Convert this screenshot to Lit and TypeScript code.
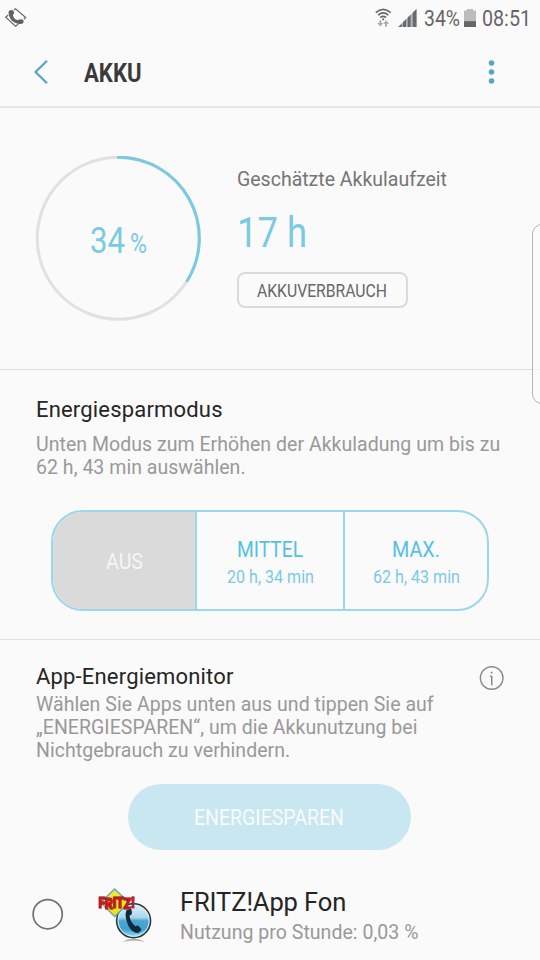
import { LitElement, html, css, svg } from "lit";
import { customElement, property } from "lit/decorators.js";

/** A single line of narrow text, squeezed to a given advance width. */
@customElement("narrow-text")
class NarrowText extends LitElement {
  @property() text = "";
  @property({ type: Number }) size = 22;
  @property({ type: Number }) width = 50;
  static styles = css`
    :host { display: block; flex: none; }
    svg { display: block; overflow: visible; }
    text { font-family: Roboto, sans-serif; fill: currentColor; }
  `;
  render() {
    const cap = Math.round(this.size * 0.711);
    return html`<svg width=${this.width} height=${cap}>
      <text x="0" y=${cap} font-size=${this.size} textLength=${this.width} lengthAdjust="spacingAndGlyphs">${this.text}</text>
    </svg>`;
  }
}

const narrow = (text: string, size: number, width: number, cls = "") =>
  html`<narrow-text class=${cls} .text=${text} .size=${size} .width=${width}></narrow-text>`;

const callIcon = html`<svg width="22" height="20" viewBox="0 0 22 20">
  <g fill="none" stroke="#6a6a6a" stroke-width="1.200">
    <path d="M9 2 10.500 .8 20.700 9.500 18.800 11.300"/><path d="M3.200 7 .8 9.200 10.500 18.200 13.300 16"/>
  </g>
  <g fill="#626262">
    <ellipse cx="6.300" cy="4.600" rx="2.700" ry="2.500"/><ellipse cx="15.700" cy="13.600" rx="2.900" ry="2.400"/>
    <path d="M3.700 4.500C3.600 11 8.500 16 15.500 16L14 12.200C10.500 12.200 7.800 9.600 8 6z"/>
  </g>
</svg>`;

const wifiIcon = html`<svg width="17" height="20" viewBox="0 0 17 20">
  <g fill="none" stroke="#666" stroke-width="1.6">
    <path d="M.8 4.600Q8.200-2 15.700 4.600"/><path d="M3.100 7.100Q8.200 2.800 13.300 7.100"/><path d="M5.300 9.500Q8.200 7.300 11 9.500"/>
  </g>
  <circle cx="8.200" cy="11.300" r="1.100" fill="#666"/>
  <path d="M4.300 12.500v2.500H2.300l3 3.500 3-3.500H6.300v-2.500zM10 18.500v-2.800H8.200l2.900-3.400 2.900 3.400H12v2.800z" fill="#aaa"/>
</svg>`;

const signalIcon = html`<svg width="19" height="18" viewBox="0 0 19 18">
  <path d="M0 18 18.500 0v18z" fill="#b5b5b5"/>
  <path d="M.5 18 3.700 14.600V18zM5 18v-4.800L8 10.200V18zM9.700 18V8.600l2.900-2.900V18zM14.700 18V3.700L18.500 0v18z" fill="#666b6b"/>
</svg>`;

const batteryIcon = html`<svg width="12" height="18" viewBox="0 0 12 18">
  <path d="M0 1.500h3V0h6v1.500h3V18H0z" fill="#bcbcbc"/><path d="M0 12.200h12V18H0z" fill="#666"/>
</svg>`;

const fritzIcon = html`<svg width="70" height="70" viewBox="0 0 70 70">
  <defs>
    <linearGradient id="ball" x1="0" y1="0" x2="0" y2="1">
      <stop offset="0" stop-color="#e4f3fa"/><stop offset=".4" stop-color="#a9d7ea"/>
      <stop offset=".5" stop-color="#4ba6d0"/><stop offset=".75" stop-color="#3ba5d2"/><stop offset="1" stop-color="#a5e2f5"/>
    </linearGradient>
    <linearGradient id="tile" x1="0" y1="0" x2="1" y2="1">
      <stop offset="0" stop-color="#f7f04a"/><stop offset="1" stop-color="#f0d800"/>
    </linearGradient>
  </defs>
  <path d="M32 62Q43.500 55.500 55 62Q43.500 59 32 62z" fill="#aaa"/>
  <circle cx="43.600" cy="40.800" r="17" fill="url(#ball)" stroke="#303438" stroke-width="1.500"/>
  <circle cx="43.600" cy="40.800" r="15.600" fill="none" stroke="#dff2f8" stroke-width=".9"/>
  <path d="M36.500 30.200l4-1.200c1.300.3 2 4.500 1 5.600l-2 1.200c.4 4 2.800 8.200 6 10.500l2-.7c1.800.5 4 3.600 3.800 4.800l-3 2.600c-5.500.4-9.500-5-11.300-11-1.500-4.500-2-9-.5-11.800z" fill="#10293e"/>
  <path d="M24.700 9 39 22.600 24.700 36.500 10.600 22.600z" fill="url(#tile)" stroke="#5da6bf" stroke-width="1.300"/>
  <text class="fritz" x="8.500" y="28" textLength="36" lengthAdjust="spacingAndGlyphs" dy="-.5 1.500 -1.500 .5 .5 -.5">FRITZ!</text>
</svg>`;

@customElement("app-root")
class AppRoot extends LitElement {
  static styles = css`
    :host { display: block; position: relative; width: 540px; height: 960px; overflow: hidden; background: #fafafa; font-family: Roboto, sans-serif; color: #252525; }
    * { box-sizing: border-box; }
    svg { display: block; flex: none; }
    .status { height: 36px; display: flex; align-items: flex-start; padding: 8px 9px 0 5px; color: #666; }
    .status .wifi { margin-left: auto; }
    .status .signal { margin: 1px 7px 0 6px; }
    .status .pct { margin-top: 2px; }
    .status .batt { margin: 1px 6px 0 4px; }
    .status .time { margin-top: 2px; }
    header { height: 72px; display: flex; align-items: center; padding: 2px 44px 0 34px; border-bottom: 2px solid #e6e6e6; }
    header .title { font-weight: 700; color: #3a3a3a; margin-left: 35px; margin-top: 1px; }
    header .more { margin-left: auto; }
    .summary { height: 262px; display: flex; padding: 48px 0 0 35px; border-bottom: 1px solid #dcdcdc; color: #7acae2; }
    .gauge { width: 166px; height: 166px; display: grid; }
    .gauge > * { grid-area: 1 / 1; }
    .gauge .value { display: flex; align-items: flex-end; justify-content: center; gap: 5px; padding-bottom: 69px; }
    .info { margin-left: 36px; display: flex; flex-direction: column; align-items: flex-start; }
    .info .cap { font-size: 19.500px; line-height: 24px; color: #757575; margin-top: 12px; white-space: nowrap; }
    .info .hours { margin: 25px 0 0 0; }
    .usage { margin-top: 25px; width: 171px; height: 36px; border: 2px solid #dadada; border-radius: 8px; display: grid; place-items: center; padding-right: 1px; color: #666; }
    h2 { margin: 0; font-weight: 400; font-size: 22px; line-height: 28px; color: #252525; letter-spacing: .18px; }
    p { margin: 0; font-size: 19.500px; line-height: 23px; color: #999; white-space: nowrap; letter-spacing: .035px; }
    .mode { height: 270px; padding: 26px 36px 0; border-bottom: 1px solid #e2e2e2; }
    .mode p { margin-top: 9px; }
    .segments { display: grid; grid-template-columns: 144px 148px 142px; width: 438px; height: 101px; margin: 31px 0 0 15px; border: 2px solid #9ad7ea; border-radius: 32px; overflow: hidden; }
    .seg { display: flex; flex-direction: column; align-items: center; padding-top: 29px; gap: 13px; color: #54c1e2; border-right: 2px solid #9ad7ea; }
    .seg:last-child { border-right: 0; }
    .seg.off { background: #dadada; color: #f6f6f6; padding-top: 41px; }
    .seg .sub { color: #7acae2; }
    .monitor { padding: 23px 36px 0; }
    .row { display: flex; justify-content: space-between; height: 30px; }
    .save { width: 283px; height: 66px; margin: 22px 0 0 92px; border-radius: 33px; background: #c9e7f1; color: #f8fbfc; display: grid; place-items: center; padding-right: 2px; }
    .app { display: flex; padding-top: 30px; }
    .app .radio { margin: 18px 0 0 -4px; }
    .app .logo { margin-left: 26px; }
    .app .name { font-size: 25.500px; line-height: 30px; color: #252525; margin-top: 7px; white-space: nowrap; letter-spacing: -.1px; }
    .app p { margin-top: 4px; }
    .app .txt { margin-left: 20px; }
    .fritz { font: 900 15.500px Roboto, sans-serif; fill: #d9121f; stroke: #5c1020; stroke-width: 1.200px; paint-order: stroke; }
    .edge { position: absolute; left: 532px; top: 224px; width: 20px; height: 180px; border: 1px solid #b4b4b4; border-radius: 11px; background: rgba(251, 251, 251, .75); }
  `;

  render() {
    return html`
      <div class="status">
        ${callIcon}
        <div class="wifi">${wifiIcon}</div>
        <div class="signal">${signalIcon}</div>
        ${narrow("34%", 22.5, 36, "pct")}
        <div class="batt">${batteryIcon}</div>
        ${narrow("08:51", 22.5, 49, "time")}
      </div>
      <header>
        <svg width="15" height="24" viewBox="0 0 15 24"><path d="M13 .8 1.500 12 13 23.200" fill="none" stroke="#57a2c2" stroke-width="2.200"/></svg>
        ${narrow("AKKU", 25, 57.5, "title")}
        <svg class="more" width="9" height="26" viewBox="0 0 9 26" fill="#57a6c6"><circle cx="4.500" cy="4" r="2.800"/><circle cx="4.500" cy="13" r="2.800"/><circle cx="4.500" cy="22" r="2.800"/></svg>
      </header>
      <section class="summary">
        <div class="gauge">
          <svg width="166" height="166" viewBox="0 0 166 166" fill="none" stroke-width="3">
            <circle cx="83.200" cy="82.200" r="81" stroke="#e1e1e1"/>
            ${svg`<path d="M82 1.200A81 81 0 0 1 151.600 125.800" stroke="#7acae2"/>`}
          </svg>
          <div class="value">${narrow("34", 36, 35)}${narrow("%", 27, 17)}</div>
        </div>
        <div class="info">
          <div class="cap">Geschätzte Akkulaufzeit</div>
          ${narrow("17 h", 42.5, 70, "hours")}
          <div class="usage">${narrow("AKKUVERBRAUCH", 18.5, 130)}</div>
        </div>
      </section>
      <section class="mode">
        <h2>Energiesparmodus</h2>
        <p>Unten Modus zum Erhöhen der Akkuladung um bis zu<br>62 h, 43 min auswählen.</p>
        <div class="segments">
          <div class="seg off">${narrow("AUS", 22, 37)}</div>
          <div class="seg">${narrow("MITTEL", 22, 66)}${narrow("20 h, 34 min", 18, 87, "sub")}</div>
          <div class="seg">${narrow("MAX.", 22, 48)}${narrow("62 h, 43 min", 18, 87, "sub")}</div>
        </div>
      </section>
      <section class="monitor">
        <div class="row">
          <h2>App-Energiemonitor</h2>
          <svg width="25" height="30" viewBox="0 0 25 30"><circle cx="12.700" cy="15" r="11.300" fill="none" stroke="#8a8a8a" stroke-width="1.400"/><path d="M11.700 8.800h1.800v1.800h-1.800zM10.800 12.800h2.700v9.500h-1.500v-8.300h-1.200z" fill="#8a8a8a"/></svg>
        </div>
        <p>Wählen Sie Apps unten aus und tippen Sie auf<br>„ENERGIESPAREN“, um die Akkunutzung bei<br>Nichtgebrauch zu verhindern.</p>
        <div class="save">${narrow("ENERGIESPAREN", 22, 150)}</div>
        <div class="app">
          <svg class="radio" width="32" height="32" viewBox="0 0 32 32"><circle cx="15.700" cy="16.200" r="14.600" fill="none" stroke="#707070" stroke-width="1.700"/></svg>
          <div class="logo">${fritzIcon}</div>
          <div class="txt"><div class="name">FRITZ!App Fon</div><p>Nutzung pro Stunde: 0,03 %</p></div>
        </div>
      </section>
      <div class="edge"></div>
    `;
  }
}
